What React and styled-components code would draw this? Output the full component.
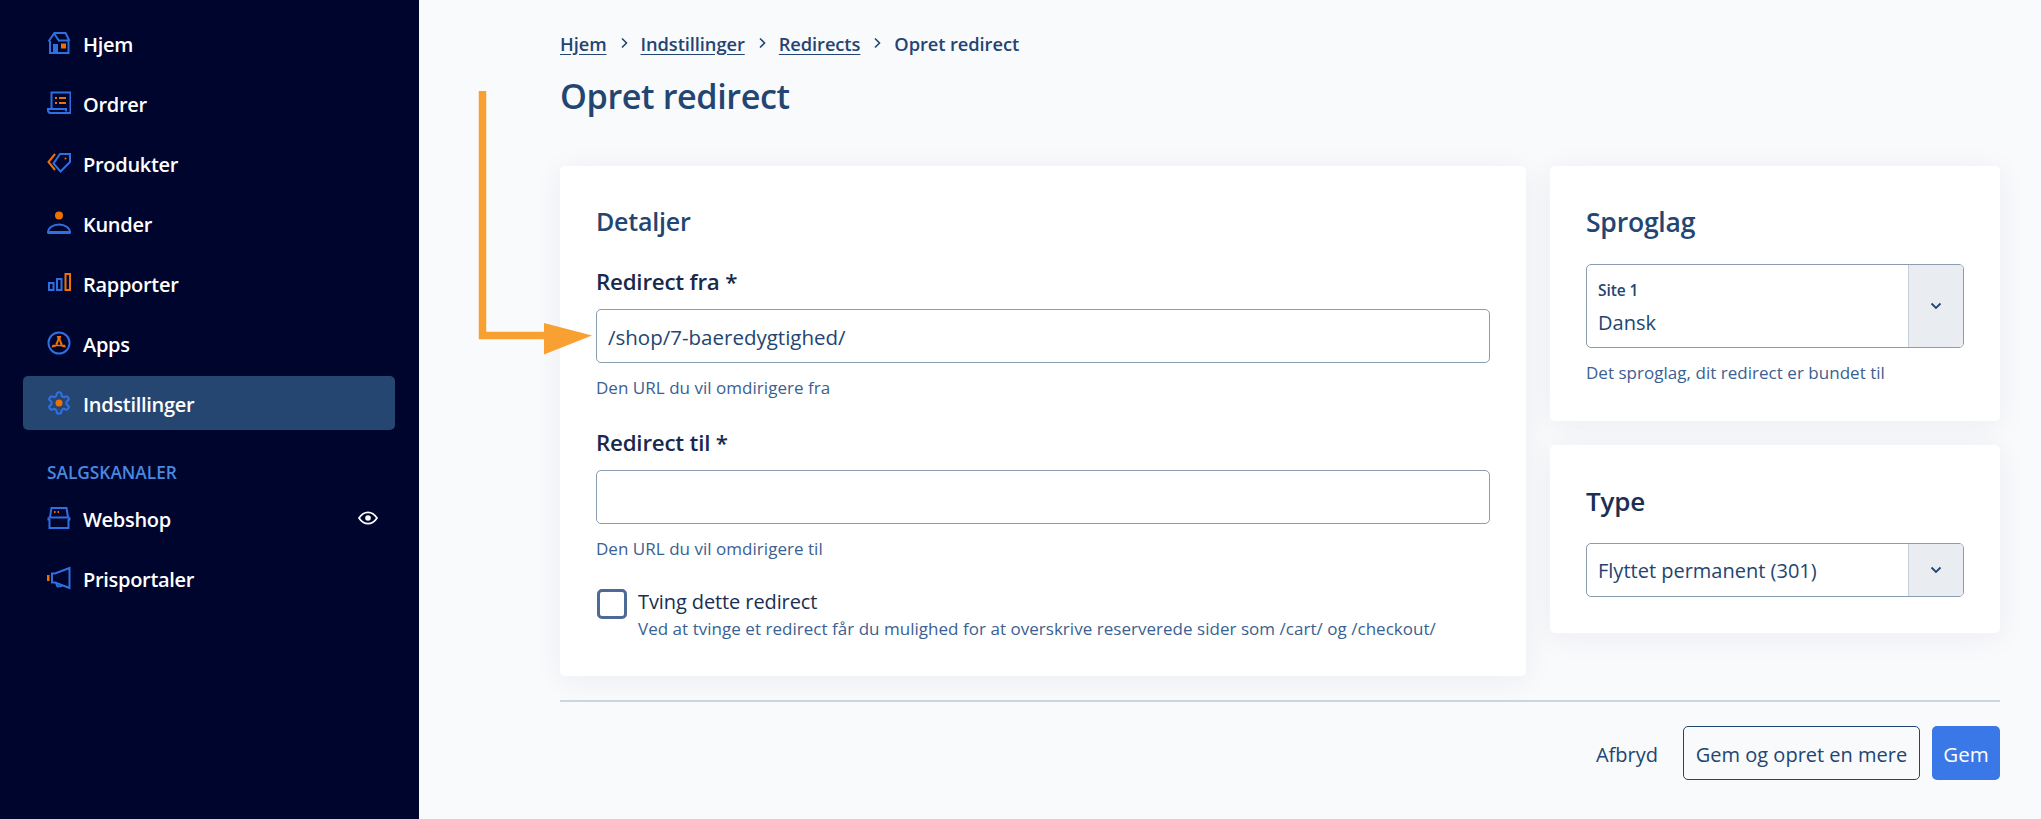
import React from "react";
import styled, { createGlobalStyle } from "styled-components";

const Global = createGlobalStyle`
  * { box-sizing: border-box; }
  html, body { margin: 0; padding: 0; height: 100%; }
  body { font-family: "Open Sans", "Noto Sans", sans-serif; background: #f9fafc; color: #234571; overflow: hidden; }
`;

const Shell = styled.div`display: flex; height: 819px; position: relative; overflow: hidden;`;
const Sidebar = styled.aside`width: 419px; flex: none; background: #00052e; padding: 16px 24px 0 23px;`;
const NavList = styled.nav`display: flex; flex-direction: column; gap: 6px;`;
const NavItem = styled.a`
  display: flex; align-items: center; gap: 12px; height: 54px; padding: 2px 17px 0 24px;
  border-radius: 5px; color: #fff; font-size: 20px; font-weight: 600; letter-spacing: -0.3px;
  background: ${p => (p.$active ? "#264672" : "transparent")};
`;
const NavIcon = styled.svg`width: 24px; height: 24px; flex: none; margin-top: -2px; fill: none; stroke: #2f6fdf; stroke-width: 2;`;
const SectionLabel = styled.div`
  margin: 32px 0 7px 24px; line-height: 22px; font-size: 17.3px; font-weight: 600; color: #4a88e0; letter-spacing: 0;
`;
const Eye = styled.svg`width: 20px; height: 14px; margin-left: auto; margin-top: -2px; fill: none; stroke: #fff; stroke-width: 1.8;`;

const Main = styled.main`flex: 1; min-width: 0; padding: 30px 41px 0 141px;`;
const Crumbs = styled.div`display: flex; align-items: center; height: 26px; font-size: 18.3px; font-weight: 600; letter-spacing: -0.08px;`;
const Crumb = styled.a`color: #234571; text-decoration: underline; text-underline-offset: 3px;`;
const CrumbCurrent = styled.span`color: #234571;`;
const CrumbSep = styled.svg`width: 10px; height: 12px; margin: 0 12px; fill: none; stroke: #234571; stroke-width: 1.6;`;
const Title = styled.h1`margin: 18px 0 0; font-size: 34.2px; line-height: 44px; font-weight: 600; letter-spacing: -0.4px; color: #234571;`;

const Columns = styled.div`display: grid; grid-template-columns: 966px 450px; gap: 24px; margin-top: 48px; align-items: start;`;
const Stack = styled.div`display: flex; flex-direction: column; gap: 24px;`;
const Card = styled.section`
  background: #fff; border-radius: 5px; box-shadow: 0 4px 30px rgba(20, 30, 60, .06);
  padding: ${p => p.$top}px 36px ${p => p.$bottom}px;
`;
const CardTitle = styled.h2`
  margin: 0 0 ${p => p.$gap}px; font-size: ${p => p.$size}px; line-height: 40px; font-weight: 600; letter-spacing: -0.2px;
  color: ${p => (p.$dark ? "#1a2f52" : "#234571")};
`;
const Label = styled.label`
  display: block; margin: ${p => p.$top}px 0 12px; font-size: 22.3px; line-height: 30px; font-weight: 600; color: #17294d; letter-spacing: -0.2px;
`;
const InputBox = styled.div`
  height: 54px; border: 1.5px solid #8a9cb0; border-radius: 5px; padding: 2px 11px 0; display: flex; align-items: center;
  font-size: 20.5px; color: #234571; background: #fff; letter-spacing: 0;
`;
const Help = styled.div`margin-top: 13px; font-size: 17px; line-height: 24px; color: #3a5f92; letter-spacing: 0.03px;`;
const CheckRow = styled.div`display: flex; gap: 11px; margin-top: 28px; align-items: flex-start;`;
const CheckBox = styled.span`width: 30px; height: 30px; border: 3px solid #4c6a95; border-radius: 5px; flex: none; background: #fff; margin-left: 1px;`;
const CheckText = styled.div`display: flex; flex-direction: column; gap: 1px;`;
const CheckTitle = styled.div`font-size: 20px; line-height: 26px; color: #1a2f52; letter-spacing: -0.1px;`;
const CheckDesc = styled.div`font-size: 17px; line-height: 26px; color: #3a5f92; letter-spacing: 0.03px;`;

const Select = styled.div`
  display: flex; height: ${p => p.$h}px; border: 1.5px solid #8a9cb0; border-radius: 5px; overflow: hidden; background: #fff;
`;
const SelectValue = styled.div`
  flex: 1; padding: 2px 11px 0; display: flex; flex-direction: column; justify-content: center; color: #234571; font-size: 20px; letter-spacing: 0;
`;
const SelectGroup = styled.div`font-size: 15.5px; line-height: 26px; font-weight: 600; letter-spacing: -0.1px;`;
const SelectText = styled.div`line-height: 30px; margin-top: ${p => p.$top || 0}px;`;
const SelectBtn = styled.div`
  width: 55px; flex: none; background: #e9edf2; border-left: 1.5px solid #c8d0da; display: flex; align-items: center; justify-content: center;
`;
const Chevron = styled.svg`width: 12px; height: 8px; fill: none; stroke: #234571; stroke-width: 1.8;`;

const Divider = styled.hr`margin: 24px 0; border: 0; height: 2px; background: #cdd6df;`;
const Footer = styled.div`display: flex; justify-content: flex-end; align-items: center;`;
const TextButton = styled.a`margin-right: 25px; padding-top: 2px; font-size: 20px; color: #234571;`;
const OutlineButton = styled.button`
  height: 54px; width: 237px; padding: 2px 0 0; border: 1.5px solid #234571; border-radius: 5px; background: transparent;
  font: inherit; font-size: 20px; color: #234571;
`;
const PrimaryButton = styled.button`
  height: 54px; width: 68px; margin-left: 12px; padding: 2px 0 0; border: 0; border-radius: 5px; background: #3a78e7;
  font: inherit; font-size: 20.5px; color: #fff;
`;
const Arrow = styled.svg`position: absolute; left: 478px; top: 90px; width: 116px; height: 266px;`;

const Orange = "#f06f00";

const icons = {
  home: <><path d="M1.500 10.500 7 2.500l5.500 8M7 2h11.500l4 8M12 9.500h10M3 10v12h18.500V10" /><rect x="6" y="13" width="5" height="9" fill="#2f6fdf" stroke="none" /><rect x="14" y="12.500" width="5" height="5" fill={Orange} stroke="none" /></>,
  orders: <><path d="M4.500 18V1.500h19V22H4a3 3 0 0 1-3-2.500V18h18v2.500" /><path d="M8 7h2M12 7h7M8 12h2M12 12h7" stroke={Orange} /></>,
  tag: <><path d="M8 3 1.500 11 8 19" stroke={Orange} /><path d="M13 3h10v8L13.500 20.500 6.500 12.500z" /><circle cx="18.500" cy="7.500" r="1" fill={Orange} stroke="none" /></>,
  user: <><circle cx="12" cy="4.500" r="4" fill={Orange} stroke="none" /><path d="M1 21.500c0-4.500 5-8 11-8s11 3.500 11 8z" /><path d="M1 21.500h22" strokeWidth="3" /></>,
  chart: <><rect x="2" y="12" width="4.500" height="7" /><rect x="10" y="8" width="4.500" height="11" /><rect x="18.500" y="3" width="4.500" height="16" stroke={Orange} /></>,
  apps: <><circle cx="12" cy="12" r="10.500" /><path d="M9.800 5h4.400l-.8 3 2.300 5.200-2 1L12 9.500l-1.700 4.700-2-1L10.600 8zM4.500 16.500l1-2.800 12.500 0 1 2.800-3.200-.4-2-.9H9.700l-2 .9z" fill={Orange} stroke="none" /></>,
  gear: <><g transform="translate(12 12) scale(1.07) translate(-12 -12)"><path d="M12.220 2h-.44a2 2 0 0 0-2 2v.18a2 2 0 0 1-1 1.730l-.43.250a2 2 0 0 1-2 0l-.15-.080a2 2 0 0 0-2.730.730l-.22.380a2 2 0 0 0 .730 2.730l.15.100a2 2 0 0 1 1 1.720v.510a2 2 0 0 1-1 1.740l-.15.090a2 2 0 0 0-.730 2.730l.22.380a2 2 0 0 0 2.730.730l.15-.080a2 2 0 0 1 2 0l.43.250a2 2 0 0 1 1 1.730V20a2 2 0 0 0 2 2h.44a2 2 0 0 0 2-2v-.18a2 2 0 0 1 1-1.730l.43-.250a2 2 0 0 1 2 0l.15.080a2 2 0 0 0 2.730-.730l.22-.390a2 2 0 0 0-.730-2.730l-.15-.080a2 2 0 0 1-1-1.740v-.5a2 2 0 0 1 1-1.740l.15-.090a2 2 0 0 0 .730-2.730l-.22-.380a2 2 0 0 0-2.730-.730l-.15.080a2 2 0 0 1-2 0l-.43-.250a2 2 0 0 1-1-1.730V4a2 2 0 0 0-2-2z" /></g><circle cx="12" cy="12" r="3.500" fill={Orange} stroke="none" /></>,
  shop: <><path d="M3 11 4.500 2h15L21 11" /><path d="M1.500 11.500h21M1.500 11.500v3M22.500 11.500v3M2.500 13v9h19v-9" /><path d="M7 6h1.500M10.500 6H12" stroke={Orange} /></>,
  horn: <><path d="M22.500 2v20L8 16.500H5v-9h3z" /><path d="M9 17l1.500 3.500L15 20" /><rect x="0" y="9" width="2.500" height="6" fill={Orange} stroke="none" /></>,
};

const Item = ({ icon, children, active, eye }) => (
  <NavItem $active={active}>
    <NavIcon viewBox="0 0 24 24">{icons[icon]}</NavIcon>
    {children}
    {eye && (
      <Eye viewBox="0 0 20 14">
        <path d="M1 7c2.500-3.800 5.500-5.700 9-5.700S16.500 3.200 19 7c-2.500 3.800-5.500 5.700-9 5.700S3.500 10.800 1 7z" />
        <circle cx="10" cy="7" r="2.800" fill="#fff" stroke="none" />
      </Eye>
    )}
  </NavItem>
);

const Sep = () => <CrumbSep viewBox="0 0 10 12"><path d="M3 1.500 7.500 6 3 10.500" /></CrumbSep>;
const Down = () => <Chevron viewBox="0 0 12 8"><path d="M1.500 1.500 6 6l4.500-4.500" /></Chevron>;

export default function App() {
  return (
    <Shell>
      <Global />
      <Sidebar>
        <NavList>
          <Item icon="home">Hjem</Item>
          <Item icon="orders">Ordrer</Item>
          <Item icon="tag">Produkter</Item>
          <Item icon="user">Kunder</Item>
          <Item icon="chart">Rapporter</Item>
          <Item icon="apps">Apps</Item>
          <Item icon="gear" active>Indstillinger</Item>
        </NavList>
        <SectionLabel>SALGSKANALER</SectionLabel>
        <NavList>
          <Item icon="shop" eye>Webshop</Item>
          <Item icon="horn">Prisportaler</Item>
        </NavList>
      </Sidebar>
      <Main>
        <Crumbs>
          <Crumb>Hjem</Crumb><Sep />
          <Crumb>Indstillinger</Crumb><Sep />
          <Crumb>Redirects</Crumb><Sep />
          <CrumbCurrent>Opret redirect</CrumbCurrent>
        </Crumbs>
        <Title>Opret redirect</Title>
        <Columns>
          <Card $top={35} $bottom={34}>
            <CardTitle $size={25} $gap={0}>Detaljer</CardTitle>
            <Label $top={26}>Redirect fra *</Label>
            <InputBox>/shop/7-baeredygtighed/</InputBox>
            <Help>Den URL du vil omdirigere fra</Help>
            <Label $top={28}>Redirect til *</Label>
            <InputBox />
            <Help>Den URL du vil omdirigere til</Help>
            <CheckRow>
              <CheckBox />
              <CheckText>
                <CheckTitle>Tving dette redirect</CheckTitle>
                <CheckDesc>Ved at tvinge et redirect får du mulighed for at overskrive reserverede sider som /cart/ og /checkout/</CheckDesc>
              </CheckText>
            </CheckRow>
          </Card>
          <Stack>
            <Card $top={36} $bottom={36}>
              <CardTitle $size={26.5} $gap={22}>Sproglag</CardTitle>
              <Select $h={84}>
                <SelectValue>
                  <SelectGroup>Site 1</SelectGroup>
                  <SelectText $top={5}>Dansk</SelectText>
                </SelectValue>
                <SelectBtn><Down /></SelectBtn>
              </Select>
              <Help>Det sproglag, dit redirect er bundet til</Help>
            </Card>
            <Card $top={36} $bottom={36}>
              <CardTitle $size={26} $gap={22} $dark>Type</CardTitle>
              <Select $h={54}>
                <SelectValue><SelectText>Flyttet permanent (301)</SelectText></SelectValue>
                <SelectBtn><Down /></SelectBtn>
              </Select>
            </Card>
          </Stack>
        </Columns>
        <Divider />
        <Footer>
          <TextButton>Afbryd</TextButton>
          <OutlineButton>Gem og opret en mere</OutlineButton>
          <PrimaryButton>Gem</PrimaryButton>
        </Footer>
      </Main>
      <Arrow viewBox="0 0 116 266">
        <path d="M4.500 1v244.500H70" fill="none" stroke="#f9a033" strokeWidth="7.500" />
        <path d="M66 233l48 12.500-48 19z" fill="#f9a033" />
      </Arrow>
    </Shell>
  );
}
